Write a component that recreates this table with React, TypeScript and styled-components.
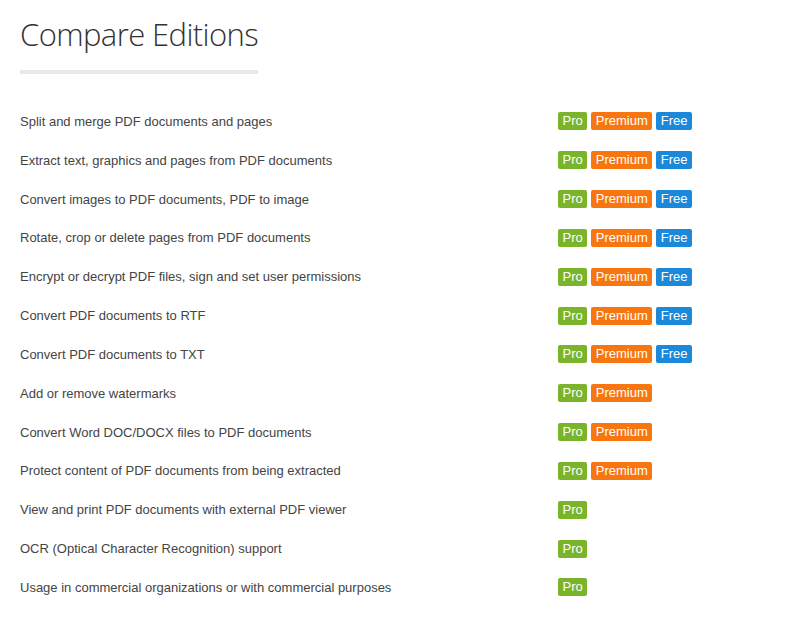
import React from 'react';
import styled, { createGlobalStyle } from 'styled-components';

type Edition = 'pro' | 'premium' | 'free';

const GlobalStyle = createGlobalStyle`
  body {
    margin: 0;
    background: #fff;
    font-family: "Liberation Sans", Arial, sans-serif;
  }
`;

const features: [string, Edition[]][] = [
  ['Split and merge PDF documents and pages', ['pro', 'premium', 'free']],
  ['Extract text, graphics and pages from PDF documents', ['pro', 'premium', 'free']],
  ['Convert images to PDF documents, PDF to image', ['pro', 'premium', 'free']],
  ['Rotate, crop or delete pages from PDF documents', ['pro', 'premium', 'free']],
  ['Encrypt or decrypt PDF files, sign and set user permissions', ['pro', 'premium', 'free']],
  ['Convert PDF documents to RTF', ['pro', 'premium', 'free']],
  ['Convert PDF documents to TXT', ['pro', 'premium', 'free']],
  ['Add or remove watermarks', ['pro', 'premium']],
  ['Convert Word DOC/DOCX files to PDF documents', ['pro', 'premium']],
  ['Protect content of PDF documents from being extracted', ['pro', 'premium']],
  ['View and print PDF documents with external PDF viewer', ['pro']],
  ['OCR (Optical Character Recognition) support', ['pro']],
  ['Usage in commercial organizations or with commercial purposes', ['pro']]
];

const labels: Record<Edition, string> = {
  free: 'Free',
  premium: 'Premium',
  pro: 'Pro'
};

const colors: Record<Edition, string> = {
  free: '#1c88d9',
  premium: '#f7760f',
  pro: '#79b42a'
};

const Page = styled.div`
  padding: 0 20px;
`;

const Title = styled.h1`
  margin: 14px 0 0;
  font-family: "Open Sans", sans-serif;
  font-weight: 300;
  font-size: 31px;
  line-height: 40px;
  color: #333;
  letter-spacing: -0.6px;
`;

const Rule = styled.div`
  width: 238px;
  height: 4px;
  margin-top: 16px;
  background: #e8e8e8;
`;

const List = styled.div`
  margin-top: 28px;
  display: flex;
  flex-direction: column;
`;

const Row = styled.div`
  display: grid;
  grid-template-columns: 538px auto;
  align-items: center;
  height: 38.83px;
`;

const Feature = styled.span`
  font-size: 13px;
  color: #444;
`;

const Badges = styled.div`
  display: flex;
  gap: 4px;
`;

const Badge = styled.span<{ $edition: Edition }>`
  display: inline-block;
  height: 18px;
  line-height: 18px;
  padding: 0 4.5px;
  border-radius: 2px;
  background: ${({ $edition }) => colors[$edition]};
  color: #fff;
  font-size: 13px;
`;

function App (): React.ReactElement {
  return (
    <Page>
      <GlobalStyle />
      <Title>Compare Editions</Title>
      <Rule />
      <List>
        {features.map(([text, editions]) => (
          <Row key={text}>
            <Feature>{text}</Feature>
            <Badges>
              {editions.map((edition) => (
                <Badge $edition={edition} key={edition}>{labels[edition]}</Badge>
              ))}
            </Badges>
          </Row>
        ))}
      </List>
    </Page>
  );
}

export default App;
